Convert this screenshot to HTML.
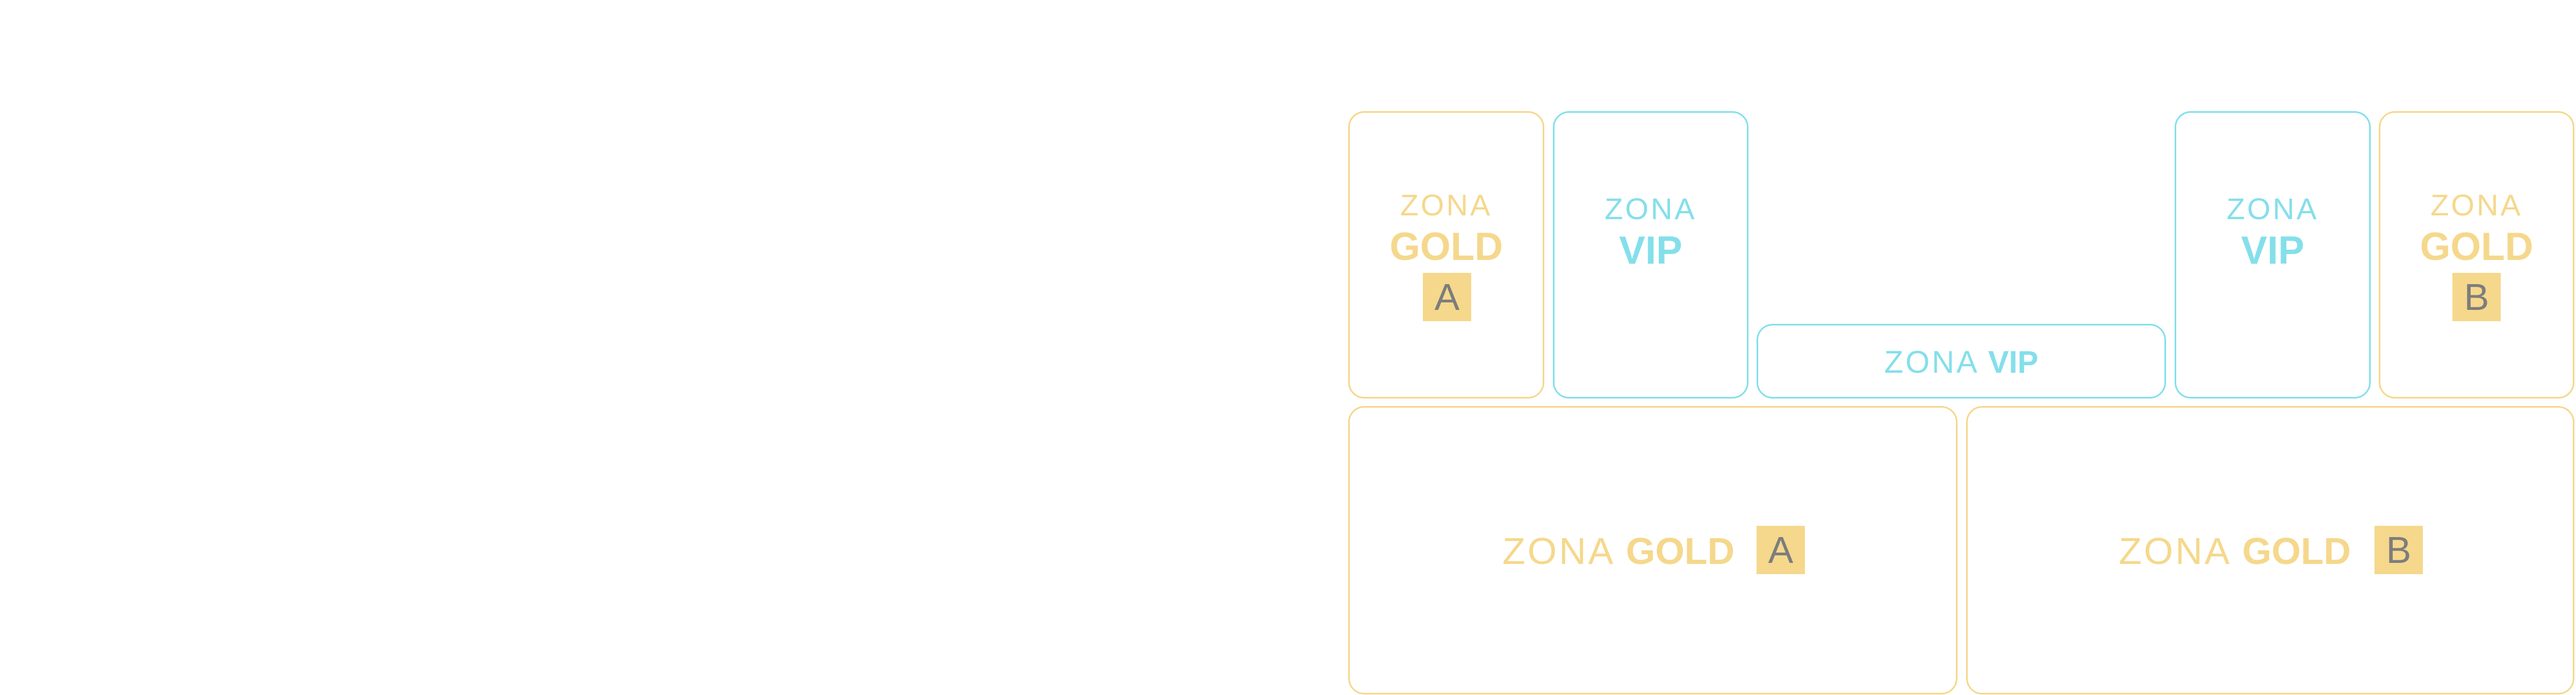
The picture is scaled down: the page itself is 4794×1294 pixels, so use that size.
<!DOCTYPE html>
<html><head><meta charset="utf-8"><style>
html,body{margin:0;padding:0;background:#fff;}
body{width:4794px;height:1294px;position:relative;overflow:hidden;font-family:"Liberation Sans",sans-serif;}
.b{position:absolute;box-sizing:border-box;border:3px solid #f5d88c;border-radius:30px;}
.c{border-color:#84dfeb;}
.t{position:absolute;line-height:1;white-space:nowrap;text-align:center;}
.g{color:#f5d88c}.v{color:#84dfeb}
.z{font-weight:normal;letter-spacing:4px;}
.bd{font-weight:bold;}
.sq{position:absolute;width:90px;height:90px;background:#f5d88c;color:#7d7d7d;font-size:70px;line-height:90px;text-align:center;font-weight:normal;}
</style></head><body>
<!-- top row -->
<div class="b" style="left:2509px;top:207px;width:365px;height:535px;"></div>
<div class="b c" style="left:2890px;top:207px;width:364px;height:535px;"></div>
<div class="b c" style="left:3269px;top:603px;width:762px;height:139px;"></div>
<div class="b c" style="left:4047px;top:207px;width:365px;height:535px;"></div>
<div class="b" style="left:4427px;top:207px;width:364px;height:535px;"></div>
<!-- bottom row -->
<div class="b" style="left:2509px;top:756px;width:1134px;height:537px;"></div>
<div class="b" style="left:3659px;top:756px;width:1132px;height:537px;"></div>

<!-- gold A tall -->
<div class="t g z" style="left:2509px;width:365px;top:354px;font-size:56px;">ZONA</div>
<div class="t g bd" style="left:2509px;width:365px;top:423px;font-size:73px;">GOLD</div>
<div class="sq" style="left:2648px;top:508px;">A</div>

<!-- VIP tall 1 -->
<div class="t v z" style="left:2890px;width:364px;top:361px;font-size:56px;">ZONA</div>
<div class="t v bd" style="left:2890px;width:364px;top:430px;font-size:73px;">VIP</div>

<!-- small VIP -->
<div class="t v" style="left:3269px;width:762px;top:646px;font-size:58px;"><span class="z">ZONA</span> <span class="bd">VIP</span></div>

<!-- VIP tall 2 -->
<div class="t v z" style="left:4047px;width:365px;top:361px;font-size:56px;">ZONA</div>
<div class="t v bd" style="left:4047px;width:365px;top:430px;font-size:73px;">VIP</div>

<!-- gold B tall -->
<div class="t g z" style="left:4427px;width:364px;top:354px;font-size:56px;">ZONA</div>
<div class="t g bd" style="left:4427px;width:364px;top:423px;font-size:73px;">GOLD</div>
<div class="sq" style="left:4564px;top:508px;">B</div>

<!-- bottom texts -->
<div class="t g" style="left:2796px;top:991px;font-size:70px;text-align:left;"><span class="z">ZONA</span> <span class="bd">GOLD</span></div>
<div class="sq" style="left:3269px;top:979px;">A</div>
<div class="t g" style="left:3943px;top:991px;font-size:70px;text-align:left;"><span class="z">ZONA</span> <span class="bd">GOLD</span></div>
<div class="sq" style="left:4419px;top:979px;">B</div>
</body></html>
